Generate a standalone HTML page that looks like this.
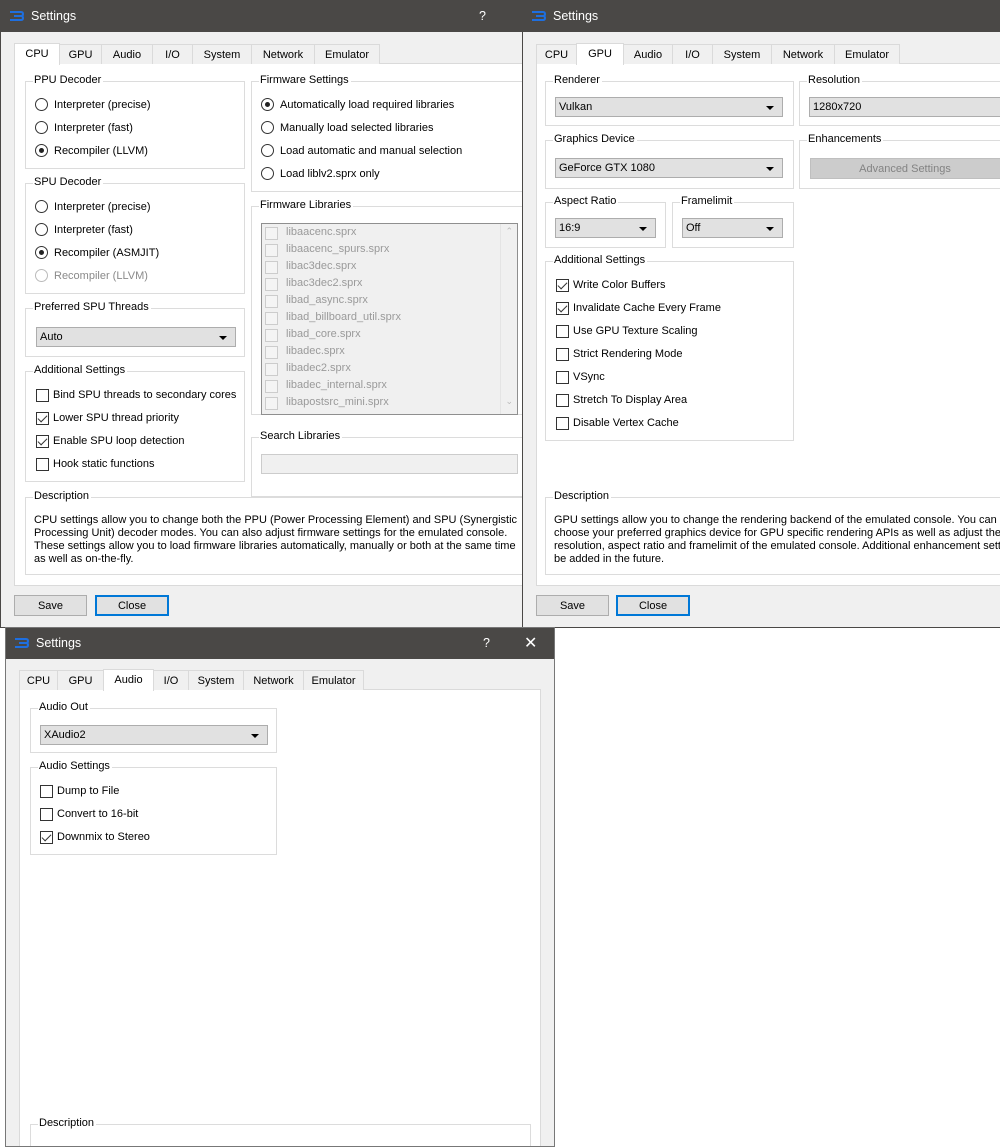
<!DOCTYPE html>
<html><head><meta charset="utf-8"><style>
*{box-sizing:border-box;margin:0;padding:0}
body{width:1000px;height:1142px;overflow:hidden;position:relative;background:#fff;font-family:"Liberation Sans",sans-serif;font-size:11px;color:#000}
div,span{position:absolute}
.win{background:#f0f0f0;border:1px solid #4a4846;overflow:hidden}
.tb{background:#4a4846;color:#fff;font-size:12.5px;height:31px;left:0;right:0;top:0}
.tb .t{left:30px;top:8px}
.ic{left:9px;top:10px;width:14px;height:10px}
.pane{background:#fff;border:1px solid #dadada}
.tab{background:#f0f0f0;border:1px solid #dadada;border-bottom:none;height:20px;text-align:center;line-height:21px}
.tab.s{background:#fff;height:22px;top:-2px;z-index:2}
.g{border:1px solid #dcdcdc}
.lg{background:#fff;left:7px;top:-8px;padding:0 2px 0 1px;white-space:nowrap}
.r{white-space:nowrap}
.rb{width:13px;height:13px;border:1px solid #333;border-radius:50%;margin-top:-2px}
.rb.c::after{content:"";position:absolute;left:3px;top:3px;width:5px;height:5px;border-radius:50%;background:#222}
.cb{width:13px;height:13px;border:1px solid #333;background:#fff;margin-top:-1px}
.cb.c::after{content:"";position:absolute;left:3px;top:0px;width:4px;height:8px;border:solid #333;border-width:0 1px 1px 0;transform:rotate(45deg)}
.dd{background:#e1e1e1;border:1px solid #adadad;padding-left:3px;line-height:19px;white-space:nowrap}
.dd::after{content:"";position:absolute;right:8px;top:8px;border:4px solid transparent;border-top:4px solid #000;border-bottom:none}
.btn{background:#e1e1e1;border:1px solid #adadad;text-align:center;line-height:20px}
.btn.f{border:2px solid #0078d7;line-height:18px}
.dis{color:#8a8a8a}
.lib{color:#9a9a9a;white-space:nowrap}
.lib .b{width:13px;height:13px;border:1px solid #ccc;background:#f4f4f4;left:-21px;top:1px}
</style></head><body>

<!-- WINDOW 1 -->
<div class="win" style="left:0;top:0;width:524px;height:628px">
 <div class="tb"><svg class="ic" viewBox="0 0 14 10" style="position:absolute"><path d="M0 1H11Q13 1 13 3Q13 5 11 5H4M4 5H11Q13 5 13 7Q13 9 11 9H0" stroke="#1e6fe0" stroke-width="2" fill="none"/></svg><span class="t">Settings</span><span style="left:478px;top:8px">?</span></div>
 <div class="pane" style="left:13px;top:62px;width:520px;height:523px">
  <div class="g" style="left:10px;top:17px;width:220px;height:88px"><span class="lg">PPU Decoder</span>
   <div class="rb" style="left:9px;top:18px"></div><span class="r" style="left:28px;top:17px">Interpreter (precise)</span>
   <div class="rb" style="left:9px;top:41px"></div><span class="r" style="left:28px;top:40px">Interpreter (fast)</span>
   <div class="rb c" style="left:9px;top:64px"></div><span class="r" style="left:28px;top:63px">Recompiler (LLVM)</span>
  </div>
  <div class="g" style="left:10px;top:119px;width:220px;height:111px"><span class="lg">SPU Decoder</span>
   <div class="rb" style="left:9px;top:18px"></div><span class="r" style="left:28px;top:17px">Interpreter (precise)</span>
   <div class="rb" style="left:9px;top:41px"></div><span class="r" style="left:28px;top:40px">Interpreter (fast)</span>
   <div class="rb c" style="left:9px;top:64px"></div><span class="r" style="left:28px;top:63px">Recompiler (ASMJIT)</span>
   <div class="rb" style="left:9px;top:87px;border-color:#bbb"></div><span class="r dis" style="left:28px;top:86px">Recompiler (LLVM)</span>
  </div>
  <div class="g" style="left:10px;top:244px;width:220px;height:49px"><span class="lg">Preferred SPU Threads</span>
   <div class="dd" style="left:10px;top:18px;width:200px;height:20px">Auto</div>
  </div>
  <div class="g" style="left:10px;top:307px;width:220px;height:111px"><span class="lg">Additional Settings</span>
   <div class="cb" style="left:10px;top:18px"></div><span class="r" style="left:27px;top:17px">Bind SPU threads to secondary cores</span>
   <div class="cb c" style="left:10px;top:41px"></div><span class="r" style="left:27px;top:40px">Lower SPU thread priority</span>
   <div class="cb c" style="left:10px;top:64px"></div><span class="r" style="left:27px;top:63px">Enable SPU loop detection</span>
   <div class="cb" style="left:10px;top:87px"></div><span class="r" style="left:27px;top:86px">Hook static functions</span>
  </div>
  <div class="g" style="left:236px;top:17px;width:290px;height:111px"><span class="lg">Firmware Settings</span>
   <div class="rb c" style="left:9px;top:18px"></div><span class="r" style="left:28px;top:17px">Automatically load required libraries</span>
   <div class="rb" style="left:9px;top:41px"></div><span class="r" style="left:28px;top:40px">Manually load selected libraries</span>
   <div class="rb" style="left:9px;top:64px"></div><span class="r" style="left:28px;top:63px">Load automatic and manual selection</span>
   <div class="rb" style="left:9px;top:87px"></div><span class="r" style="left:28px;top:86px">Load liblv2.sprx only</span>
  </div>
  <div class="g" style="left:236px;top:142px;width:290px;height:209px"><span class="lg">Firmware Libraries</span>
   <div style="left:9px;top:16px;width:257px;height:192px;background:#f0f0f0;border:1px solid #8f8f8f">
    <span class="lib" style="left:24px;top:2px"><div class="b"></div>libaacenc.sprx</span>
    <span class="lib" style="left:24px;top:19px"><div class="b"></div>libaacenc_spurs.sprx</span>
    <span class="lib" style="left:24px;top:36px"><div class="b"></div>libac3dec.sprx</span>
    <span class="lib" style="left:24px;top:53px"><div class="b"></div>libac3dec2.sprx</span>
    <span class="lib" style="left:24px;top:70px"><div class="b"></div>libad_async.sprx</span>
    <span class="lib" style="left:24px;top:87px"><div class="b"></div>libad_billboard_util.sprx</span>
    <span class="lib" style="left:24px;top:104px"><div class="b"></div>libad_core.sprx</span>
    <span class="lib" style="left:24px;top:121px"><div class="b"></div>libadec.sprx</span>
    <span class="lib" style="left:24px;top:138px"><div class="b"></div>libadec2.sprx</span>
    <span class="lib" style="left:24px;top:155px"><div class="b"></div>libadec_internal.sprx</span>
    <span class="lib" style="left:24px;top:172px"><div class="b"></div>libapostsrc_mini.sprx</span>
    <div style="right:0;top:0;width:17px;height:190px;border-left:1px solid #e4e4e4"></div>
    <span style="right:4px;top:2px;color:#bbb;font-size:9px">&#8963;</span>
    <span style="right:4px;top:172px;color:#bbb;font-size:9px">&#8964;</span>
   </div>
  </div>
  <div class="g" style="left:236px;top:373px;width:290px;height:60px"><span class="lg">Search Libraries</span>
   <div style="left:9px;top:16px;width:257px;height:20px;background:#f0f0f0;border:1px solid #ccc"></div>
  </div>
  <div class="g" style="left:10px;top:433px;width:520px;height:78px"><span class="lg">Description</span>
   <span style="left:8px;top:16px;line-height:13px;width:490px;white-space:normal">CPU settings allow you to change both the PPU (Power Processing Element) and SPU (Synergistic Processing Unit) decoder modes. You can also adjust firmware settings for the emulated console. These settings allow you to load firmware libraries automatically, manually or both at the same time as well as on-the-fly.</span>
  </div>
 </div>
 <div class="tab s" style="left:13px;top:42px;width:46px">CPU</div>
 <div class="tab" style="left:58px;top:43px;width:43px">GPU</div>
 <div class="tab" style="left:100px;top:43px;width:52px">Audio</div>
 <div class="tab" style="left:151px;top:43px;width:41px">I/O</div>
 <div class="tab" style="left:191px;top:43px;width:60px">System</div>
 <div class="tab" style="left:250px;top:43px;width:64px">Network</div>
 <div class="tab" style="left:313px;top:43px;width:66px">Emulator</div>
 <div class="btn" style="left:13px;top:594px;width:73px;height:21px">Save</div>
 <div class="btn f" style="left:94px;top:594px;width:74px;height:21px">Close</div>
</div>

<!-- WINDOW 2 -->
<div class="win" style="left:522px;top:0;width:490px;height:628px">
 <div class="tb"><svg class="ic" viewBox="0 0 14 10" style="position:absolute"><path d="M0 1H11Q13 1 13 3Q13 5 11 5H4M4 5H11Q13 5 13 7Q13 9 11 9H0" stroke="#1e6fe0" stroke-width="2" fill="none"/></svg><span class="t">Settings</span></div>
 <div class="pane" style="left:13px;top:62px;width:500px;height:523px">
  <div class="g" style="left:8px;top:17px;width:249px;height:45px"><span class="lg">Renderer</span>
   <div class="dd" style="left:9px;top:15px;width:228px;height:20px">Vulkan</div></div>
  <div class="g" style="left:262px;top:17px;width:240px;height:45px"><span class="lg">Resolution</span>
   <div class="dd" style="left:9px;top:15px;width:240px;height:20px">1280x720</div></div>
  <div class="g" style="left:8px;top:76px;width:249px;height:49px"><span class="lg">Graphics Device</span>
   <div class="dd" style="left:9px;top:17px;width:228px;height:20px">GeForce GTX 1080</div></div>
  <div class="g" style="left:262px;top:76px;width:240px;height:49px"><span class="lg">Enhancements</span>
   <div class="btn dis" style="left:10px;top:17px;width:240px;height:21px;background:#cccccc;border-color:#bfbfbf;color:#838383;padding-right:50px">Advanced Settings</div></div>
  <div class="g" style="left:8px;top:138px;width:121px;height:46px"><span class="lg">Aspect Ratio</span>
   <div class="dd" style="left:9px;top:15px;width:101px;height:20px">16:9</div></div>
  <div class="g" style="left:135px;top:138px;width:122px;height:46px"><span class="lg">Framelimit</span>
   <div class="dd" style="left:9px;top:15px;width:101px;height:20px">Off</div></div>
  <div class="g" style="left:8px;top:197px;width:249px;height:180px"><span class="lg">Additional Settings</span>
   <div class="cb c" style="left:10px;top:18px"></div><span class="r" style="left:27px;top:17px">Write Color Buffers</span>
   <div class="cb c" style="left:10px;top:41px"></div><span class="r" style="left:27px;top:40px">Invalidate Cache Every Frame</span>
   <div class="cb" style="left:10px;top:64px"></div><span class="r" style="left:27px;top:63px">Use GPU Texture Scaling</span>
   <div class="cb" style="left:10px;top:87px"></div><span class="r" style="left:27px;top:86px">Strict Rendering Mode</span>
   <div class="cb" style="left:10px;top:110px"></div><span class="r" style="left:27px;top:109px">VSync</span>
   <div class="cb" style="left:10px;top:133px"></div><span class="r" style="left:27px;top:132px">Stretch To Display Area</span>
   <div class="cb" style="left:10px;top:156px"></div><span class="r" style="left:27px;top:155px">Disable Vertex Cache</span>
  </div>
  <div class="g" style="left:8px;top:433px;width:500px;height:78px"><span class="lg">Description</span>
   <span style="left:8px;top:16px;line-height:13px;white-space:nowrap">GPU settings allow you to change the rendering backend of the emulated console. You can also<br>choose your preferred graphics device for GPU specific rendering APIs as well as adjust the o<br>resolution, aspect ratio and framelimit of the emulated console. Additional enhancement settin<br>be added in the future.</span>
  </div>
 </div>
 <div class="tab" style="left:13px;top:43px;width:41px">CPU</div>
 <div class="tab s" style="left:53px;top:42px;width:48px">GPU</div>
 <div class="tab" style="left:100px;top:43px;width:50px">Audio</div>
 <div class="tab" style="left:149px;top:43px;width:41px">I/O</div>
 <div class="tab" style="left:189px;top:43px;width:60px">System</div>
 <div class="tab" style="left:248px;top:43px;width:64px">Network</div>
 <div class="tab" style="left:311px;top:43px;width:66px">Emulator</div>
 <div class="btn" style="left:13px;top:594px;width:73px;height:21px">Save</div>
 <div class="btn f" style="left:93px;top:594px;width:74px;height:21px">Close</div>
</div>

<!-- WINDOW 3 -->
<div class="win" style="left:5px;top:627px;width:550px;height:520px;border-color:#777">
 <div class="tb"><svg class="ic" viewBox="0 0 14 10" style="position:absolute"><path d="M0 1H11Q13 1 13 3Q13 5 11 5H4M4 5H11Q13 5 13 7Q13 9 11 9H0" stroke="#1e6fe0" stroke-width="2" fill="none"/></svg><span class="t">Settings</span><span style="left:477px;top:8px">?</span><span style="left:518px;top:5px;font-size:16px">&#10005;</span></div>
 <div class="pane" style="left:13px;top:61px;width:522px;height:470px">
  <div class="g" style="left:10px;top:18px;width:247px;height:45px"><span class="lg">Audio Out</span>
   <div class="dd" style="left:9px;top:16px;width:228px;height:20px">XAudio2</div></div>
  <div class="g" style="left:10px;top:77px;width:247px;height:88px"><span class="lg">Audio Settings</span>
   <div class="cb" style="left:9px;top:18px"></div><span class="r" style="left:26px;top:17px">Dump to File</span>
   <div class="cb" style="left:9px;top:41px"></div><span class="r" style="left:26px;top:40px">Convert to 16-bit</span>
   <div class="cb c" style="left:9px;top:64px"></div><span class="r" style="left:26px;top:63px">Downmix to Stereo</span>
  </div>
  <div class="g" style="left:10px;top:434px;width:501px;height:60px"><span class="lg">Description</span></div>
 </div>
 <div class="tab" style="left:13px;top:42px;width:39px">CPU</div>
 <div class="tab" style="left:51px;top:42px;width:47px">GPU</div>
 <div class="tab s" style="left:97px;top:41px;width:51px">Audio</div>
 <div class="tab" style="left:147px;top:42px;width:36px">I/O</div>
 <div class="tab" style="left:182px;top:42px;width:56px">System</div>
 <div class="tab" style="left:237px;top:42px;width:61px">Network</div>
 <div class="tab" style="left:297px;top:42px;width:61px">Emulator</div>
</div>
</body></html>
